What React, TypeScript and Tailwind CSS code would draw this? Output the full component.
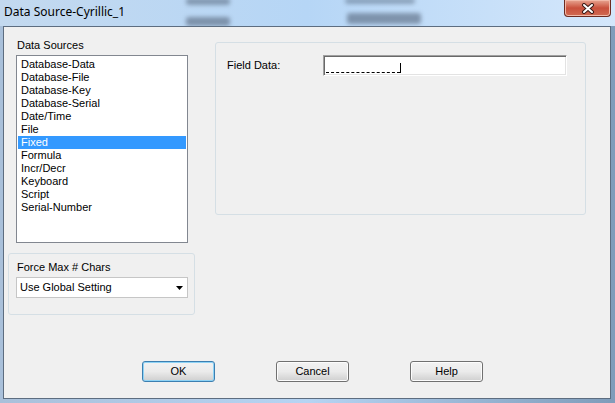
import { useState } from 'react';

const sources = [
    'Database-Data',
    'Database-File',
    'Database-Key',
    'Database-Serial',
    'Date/Time',
    'File',
    'Fixed',
    'Formula',
    'Incr/Decr',
    'Keyboard',
    'Script',
    'Serial-Number',
];

function WinButton({ label, isDefault }: { label: string; isDefault?: boolean }) {
    return (
        <button
            className={`w-[73px] h-[21px] rounded-[3px] border text-[11px] leading-none text-black bg-gradient-to-b from-[#f2f2f2] via-[#ebebeb] to-[#cfcfcf] ${
                isDefault
                    ? 'border-[#3c7fb1] shadow-[inset_0_0_0_1px_#8fd3f5]'
                    : 'border-[#707070] shadow-[inset_0_0_0_1px_#fcfcfc]'
            }`}
        >
            {label}
        </button>
    );
}

export default function App() {
    const [selected, setSelected] = useState('Fixed');

    return (
        <div className="w-[615px] h-[403px] flex flex-col overflow-hidden bg-gradient-to-r from-[#a9c0da] via-[#b6d4f3] to-[#7f9cba] font-['Liberation_Sans',Arial,sans-serif] text-black">
            {/* title bar, glass with blurred desktop behind */}
            <div className="h-[26px] flex items-start overflow-hidden bg-gradient-to-r from-[#c3d9ef] via-[#b6d6f6] to-[#d4e7fb]">
                <div className="w-[186px] pl-[4px] pt-[4px] text-[12px] leading-[16px] font-['Noto_Sans',sans-serif] text-black">
                    Data Source-Cyrillic_1
                </div>
                <div className="w-[159px] flex flex-col">
                    <div className="w-[44px] h-[7px] -mt-[2px] rounded-[3px] bg-[#4a5a70]/50 blur-[2px]" />
                    <div className="w-[44px] h-[9px] mt-[12px] rounded-[3px] bg-[#4a5a70]/55 blur-[2px]" />
                </div>
                <div className="w-[219px] flex flex-col">
                    <div className="w-[70px] h-[6px] -mt-[2px] rounded-[3px] bg-[#4a5a70]/45 blur-[2px]" />
                    <div className="ml-[2px] w-[74px] h-[11px] mt-[9px] rounded-[3px] bg-[#4a5a70]/55 blur-[2px]" />
                </div>
                <div className="w-[47px] h-[17px] rounded-b-[4px] border border-t-0 border-[#6b2a20] bg-gradient-to-b from-[#e7a592] via-[#c9503c] to-[#d06a52] flex items-center justify-center shadow-[inset_0_0_0_1px_#f2b9a8]">
                    <svg width="14" height="11" viewBox="0 0 14 11">
                        <path d="M3 2 L11 9 M11 2 L3 9" stroke="#3a1a16" strokeWidth="4" strokeLinecap="round" />
                        <path d="M3 2 L11 9 M11 2 L3 9" stroke="#ffffff" strokeWidth="2" strokeLinecap="round" />
                    </svg>
                </div>
            </div>

            {/* client area */}
            <div className="ml-[3px] mr-[4px] mb-[4px] h-[373px] bg-[#f0f0f0] border border-[#5d6d80] flex flex-col text-[11px]">
                <div className="flex items-start pl-[4px]">
                    {/* left column */}
                    <div className="w-[187px] flex flex-col">
                        <div className="mt-[12px] ml-[9px] h-[13px] leading-[13px]">Data Sources</div>
                        <div className="mt-[3px] ml-[8px] w-[172px] h-[188px] bg-white border border-[#828790] pt-[2px] px-[1px]">
                            {sources.map((s) => (
                                <div
                                    key={s}
                                    onClick={() => setSelected(s)}
                                    className={`h-[13px] leading-[13px] pl-[3px] ${
                                        s === selected ? 'bg-[#3399ff] text-white' : ''
                                    }`}
                                >
                                    {s}
                                </div>
                            ))}
                        </div>

                        <div className="mt-[10px] h-[62px] rounded-[3px] border border-[#d5dfe5] pt-[7px] pl-[7px] flex flex-col">
                            <div className="ml-[1px] h-[13px] leading-[13px]">Force Max # Chars</div>
                            <div className="mt-[3px] w-[172px] h-[21px] bg-white border border-[#c6c6c6] flex items-center justify-between pl-[3px] pr-[4px]">
                                <span>Use Global Setting</span>
                                <svg width="7" height="4" viewBox="0 0 7 4">
                                    <polygon points="0,0 7,0 3.5,4" fill="#000" />
                                </svg>
                            </div>
                        </div>
                    </div>

                    {/* right group */}
                    <div className="ml-[20px] mt-[15px] w-[371px] h-[173px] rounded-[3px] border border-[#d5dfe5] pt-[12px] pl-[11px]">
                        <div className="flex items-center">
                            <div className="w-[96px]">Field Data:</div>
                            <div className="w-[244px] h-[21px] bg-white border-t border-l border-[#a0a0a0] border-r border-b border-r-white border-b-white shadow-[inset_1px_1px_0_#696969,inset_-1px_-1px_0_#e3e3e3] flex items-end pl-[2px] pb-[2px]">
                                <span className="w-[74px] h-px border-b border-dashed border-black" />
                                <span className="w-px h-[10px] bg-black" />
                            </div>
                        </div>
                    </div>
                </div>

                <div className="mt-auto mb-[16px] ml-[138px] flex gap-[61px]">
                    <WinButton label="OK" isDefault />
                    <WinButton label="Cancel" />
                    <WinButton label="Help" />
                </div>
            </div>
        </div>
    );
}
